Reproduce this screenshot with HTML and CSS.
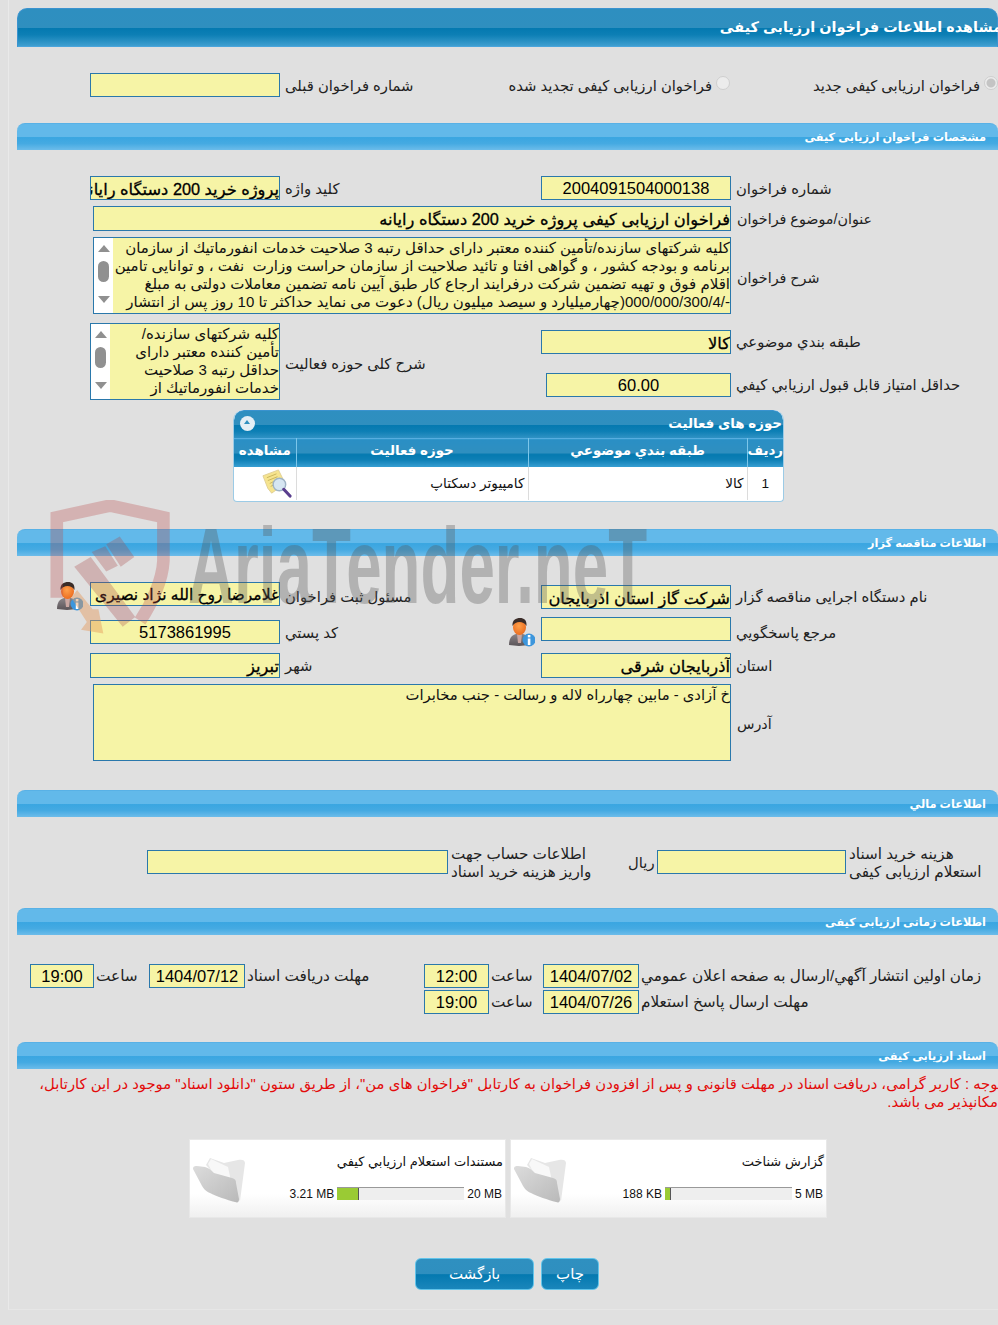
FILE: index.html
```html
<!DOCTYPE html>
<html lang="fa">
<head>
<meta charset="utf-8">
<title>مشاهده اطلاعات فراخوان ارزیابی کیفی</title>
<link rel="stylesheet" href="styles.css">
</head>
<body>
<svg class="defs" width="0" height="0">
  <defs>
    <radialGradient id="skin" cx="0.45" cy="0.4" r="0.7"><stop offset="0" stop-color="#ffa04a"/><stop offset="1" stop-color="#e8651a"/></radialGradient>
    <linearGradient id="suit" x1="0" y1="0" x2="0" y2="1"><stop offset="0" stop-color="#8a8488"/><stop offset="1" stop-color="#5a5458"/></linearGradient>
    <linearGradient id="fold" x1="0" y1="0" x2="1" y2="1"><stop offset="0" stop-color="#dcdcdc"/><stop offset="1" stop-color="#b9b9b9"/></linearGradient>
    <symbol id="user" viewBox="0 0 28 30">
      <path d="M2 28c0-7 3-10 7-11h7c4 1 6 4 6 11l-10 1z" fill="url(#suit)"/>
      <path d="M10 17h5l-1 9h-3z" fill="#c9a7a2"/>
      <ellipse cx="12.5" cy="10.5" rx="6.5" ry="7.5" fill="url(#skin)"/>
      <path d="M5.500 9C5 3 9 1 13 1c4 0 7 2 6.500 8-2-3-4-4-7-4-3 0-5 1-7 4z" fill="#3a2c28"/>
      <circle cx="22" cy="23" r="6.500" fill="#3d96dc"/>
      <rect x="20.800" y="21.500" width="2.600" height="6.500" fill="#fff"/>
      <rect x="20.800" y="18" width="2.600" height="2.400" fill="#fff"/>
    </symbol>
    <symbol id="docview" viewBox="0 0 32 30">
      <path d="M2 7 18 1l7 14-14 10-4-5z" fill="#f6e48e" stroke="#e0cf96"/>
      <path d="M6 9l10-4M7 12l10-4M9 15l6-3M10 18l4-2" stroke="#c9b45c" fill="none"/>
      <circle cx="19" cy="16" r="6.500" fill="#d6e6f2" stroke="#9fb4c6" stroke-width="1.500"/>
      <path d="M23.500 21 30 28" stroke="#5a3f8e" stroke-width="3.200" stroke-linecap="round"/>
    </symbol>
    <symbol id="folder" viewBox="0 0 54 48">
      <path d="M14 10 18 3l14 5 14-3c4-1 7 0 7 3l-5 38z" fill="#e6e6e6"/>
      <path d="M16 9 19 4l17 8 6 28-14-8z" fill="#f8f8f8"/>
      <path d="M1 14c0-3 2-3 4-3l8 1c4 1 6 3 9 6l18 5c3 1 4 2 4 5l3 16c0 3-1 4-4 3-8-2-19-6-25-9-5-2-7-5-9-9z" fill="url(#fold)"/>
    </symbol>
  </defs>
</svg>

<div class="shell">
  <main class="main">
    <h1 class="title-bar"><span class="title-text">مشاهده اطلاعات فراخوان ارزیابی کیفی</span></h1>

    <div class="r-top">
      <span></span>
      <div class="in"></div>
      <label class="lb">شماره فراخوان قبلی</label>
      <label class="radio-wrap"><input class="radio" type="radio" disabled><span>فراخوان ارزیابی کیفی تجدید شده</span></label>
      <label class="radio-wrap"><input class="radio on" type="radio" disabled checked><span>فراخوان ارزیابی کیفی جدید</span></label>
    </div>

    <h2 class="bar bar-a">مشخصات فراخوان ارزیابی کیفی</h2>

    <div class="r r-1">
      <span></span>
      <div class="in bold">پروژه خرید 200 دستگاه رایانه</div>
      <label class="lb">کلید واژه</label>
      <div class="in num">2004091504000138</div>
      <label class="lb">شماره فراخوان</label>
    </div>
    <div class="r-wide r-2">
      <span></span>
      <div class="in bold h25">فراخوان ارزیابی کیفی پروژه خرید 200 دستگاه رایانه</div>
      <label class="lb">عنوان/موضوع فراخوان</label>
    </div>
    <div class="r-wide r-3">
      <span></span>
      <div class="area h77">
        <div class="sb"><i class="up"></i><i class="thumb"></i><i class="dn"></i></div>
        <div class="area-text">
          <div>کلیه شرکتهای سازنده/تأمین کننده معتبر دارای حداقل رتبه 3 صلاحیت خدمات انفورماتیك از سازمان</div>
          <div>برنامه و بودجه کشور ، و گواهی افتا و تائید صلاحیت از سازمان حراست وزارت&nbsp; نفت ، و توانایی تامین</div>
          <div>اقلام فوق و تهیه تضمین شرکت درفرایند ارجاع کار طبق آیین نامه تضمین معاملات دولتی به مبلغ</div>
          <div>-/000/000/300/4(چهارمیلیارد و سیصد میلیون ریال) دعوت می نماید حداکثر تا 10 روز پس از انتشار</div>
        </div>
      </div>
      <label class="lb">شرح فراخوان</label>
    </div>
    <div class="r r-4">
      <span></span>
      <div class="area h77">
        <div class="sb"><i class="up"></i><i class="thumb"></i><i class="dn"></i></div>
        <div class="area-text">
          <div>کلیه شرکتهای سازنده/</div>
          <div>تأمین کننده معتبر دارای</div>
          <div>حداقل رتبه 3 صلاحیت</div>
          <div>خدمات انفورماتیك از</div>
        </div>
      </div>
      <label class="lb">شرح کلی حوزه فعالیت</label>
      <div class="stack">
        <div class="in bold">کالا</div>
        <div class="in num score">60.00</div>
      </div>
      <div class="stack-labels">
        <label class="lb">طبقه بندي موضوعي</label>
        <label class="lb">حداقل امتياز قابل قبول ارزيابي كيفي</label>
      </div>
    </div>

    <section class="act">
      <div class="act-head"><span class="act-title">حوزه های فعالیت</span><span class="collapse"></span></div>
      <table class="act-table">
        <thead><tr><th class="c1">رديف</th><th class="c2">طبقه بندي موضوعي</th><th class="c3">حوزه فعالیت</th><th class="c4">مشاهده</th></tr></thead>
        <tbody><tr><td class="c1 ctr">1</td><td class="c2">كالا</td><td class="c3">کامپیوتر دسکتاپ</td><td class="c4"><svg class="doc-ic"><use href="#docview"/></svg></td></tr></tbody>
      </table>
    </section>

    <h2 class="bar bar-b">اطلاعات مناقصه گزار</h2>

    <div class="r r-5">
      <svg class="user-ic u1"><use href="#user"/></svg>
      <div class="in bold fit">غلامرضا روح الله نژاد نصیری</div>
      <label class="lb lb-up">مسئول ثبت فراخوان</label>
      <div class="in bold mt3">شرکت گاز استان اذربایجان</div>
      <label class="lb lb-up">نام دستگاه اجرایی مناقصه گزار</label>
    </div>
    <div class="r r-6">
      <span></span>
      <div class="in num mt3">5173861995</div>
      <label class="lb lb-up">کد پستي</label>
      <div class="in"></div>
      <label class="lb lb-up">مرجع پاسخگويي</label>
      <svg class="user-ic u2"><use href="#user"/></svg>
    </div>
    <div class="r r-7">
      <span></span>
      <div class="in bold h25">تبریز</div>
      <label class="lb">شهر</label>
      <div class="in bold h25">آذربایجان شرقی</div>
      <label class="lb">استان</label>
    </div>
    <div class="r-wide r-8">
      <span></span>
      <div class="area h77 addr">خ آزادی - مابین چهارراه لاله و رسالت - جنب مخابرات</div>
      <label class="lb">آدرس</label>
    </div>

    <h2 class="bar bar-c">اطلاعات مالي</h2>

    <div class="r-money">
      <span></span>
      <div class="in"></div>
      <label class="lb lb-two">اطلاعات حساب جهت<br>واریز هزینه خرید اسناد</label>
      <label class="lb lb-plain">ریال</label>
      <div class="in"></div>
      <label class="lb lb-two">هزینه خرید اسناد<br>استعلام ارزیابی کیفی</label>
    </div>

    <h2 class="bar bar-d">اطلاعات زمانی ارزیابی کیفی</h2>

    <div class="r-time rt-1">
      <span></span>
      <div class="in num">19:00</div>
      <label class="lb lb-s">ساعت</label>
      <div class="in num">1404/07/12</div>
      <label class="lb lb-s">مهلت دریافت اسناد</label>
      <div class="in num">12:00</div>
      <label class="lb lb-s">ساعت</label>
      <div class="in num">1404/07/02</div>
      <label class="lb lb-s">زمان اولین انتشار آگهي/ارسال به صفحه اعلان عمومي</label>
    </div>
    <div class="r-time rt-2">
      <span></span><span></span><span></span><span></span><span></span>
      <div class="in num">19:00</div>
      <label class="lb lb-s">ساعت</label>
      <div class="in num">1404/07/26</div>
      <label class="lb lb-s">مهلت ارسال پاسخ استعلام</label>
    </div>

    <h2 class="bar bar-e">اسناد ارزیابی کیفی</h2>

    <p class="notice">توجه : کاربر گرامی، دریافت اسناد در مهلت قانونی و پس از افزودن فراخوان به کارتابل "فراخوان های من"، از طریق ستون "دانلود اسناد" موجود در این کارتابل،<br>امکانپذیر می باشد.</p>

    <div class="cards">
      <article class="card">
        <svg class="folder-ic"><use href="#folder"/></svg>
        <div class="card-body">
          <div class="card-title">مستندات استعلام ارزيابي کيفي</div>
          <div class="quota"><span>3.21 MB</span><span class="meter"><span class="fill" style="width:22px"></span></span><span>20 MB</span></div>
        </div>
      </article>
      <article class="card">
        <svg class="folder-ic"><use href="#folder"/></svg>
        <div class="card-body">
          <div class="card-title">گزارش شناخت</div>
          <div class="quota"><span>188 KB</span><span class="meter"><span class="fill" style="width:6px"></span></span><span>5 MB</span></div>
        </div>
      </article>
    </div>

    <div class="actions">
      <button class="btn btn-back" type="button">بازگشت</button>
      <button class="btn btn-print" type="button">چاپ</button>
    </div>
  </main>
</div>

<div class="wm" aria-hidden="true">
  <svg class="wm-shield" viewBox="0 0 130 145">
    <path d="M7 100V17L62 5l55 12v45c-1 20-12 44-24 62" fill="none" stroke="#b84a4a" stroke-opacity=".3" stroke-width="13"/>
    <path d="M58 45 72 37 87 58 73 68zM43 53 57 47 70 67 58 73zM25 68 42 58 88 120 75 130z" fill="#a84a4a" fill-opacity=".3"/>
    <path d="M28 92 44 112 50 112 55 137 32 133 38 125 22 100z" fill="#e59a5a" fill-opacity=".45"/>
  </svg>
  <span class="wm-text">AriaTender.neT</span>
</div>
</body>
</html>
```

FILE: styles.css
```css
* { box-sizing: border-box; }
html, body { margin: 0; padding: 0; height: 1325px; overflow: hidden; }
body {
  background: #e0e0e0;
  color: #111;
  font-family: "Liberation Sans", "DejaVu Sans", sans-serif;
  font-size: 13px;
  position: relative;
}
.defs { position: absolute; }
.shell {
  margin-left: 8px;
  width: 990px;
  height: 1310px;
  padding-left: 8px;
  border-left: 1px solid #e9e9e9;
  border-bottom: 1px solid #e6e6e6;
}
.main { width: 981px; padding-top: 8px; }

/* bars */
.title-bar {
  margin: 0;
  height: 39px;
  border: 1px solid #3a93cf;
  border-bottom-color: #4aa5dc;
  border-radius: 10px 10px 0 0;
  background: linear-gradient(#2e8fc0 0, #2f8fbf 50%, #0479b0 52%, #0d7fb5 70%, #3f9fd0 100%);
  color: #fff;
  direction: rtl;
  font-size: 14.400px;
  font-weight: bold;
  line-height: 36px;
  white-space: nowrap;
  text-align: right;
  overflow: visible;
}
.title-text { margin-right: -5px; display: inline-block; }
.bar {
  margin: 0;
  height: 27px;
  border-top: 1px solid #58b1e6;
  border-radius: 8px 8px 0 0;
  background: linear-gradient(#62b9ea 0, #62b9ea 50%, #3aa6e1 52%, #45aae2 75%, #6cbcea 100%);
  color: #fff;
  direction: rtl;
  font-size: 11.300px;
  font-weight: bold;
  line-height: 27px;
  padding-right: 12px;
  white-space: nowrap;
}
.bar-a { margin-top: 26px; }
.bar-b { margin-top: 27px; }
.bar-c { margin-top: 29px; }
.bar-d { margin-top: 34px; }
.bar-e { margin-top: 28px; }

/* inputs */
.in {
  height: 24px;
  width: 100%;
  border: 1px solid #2a78ab;
  background: #f6f4a6;
  direction: rtl;
  text-align: right;
  font-size: 15px;
  line-height: 22px;
  white-space: nowrap;
  overflow: hidden;
  color: #000;
}
.in.bold { font-size: 16.300px; line-height: 24px; -webkit-text-stroke: .3px #000; }
.in.fit { font-size: 15.500px; }
.in.num { text-align: center; font-size: 16.500px; font-family: "Liberation Sans", sans-serif; direction: ltr; }
.h25 { height: 25px; }
.mt3 { margin-top: 3px; }
.lb {
  direction: rtl;
  text-align: left;
  font-size: 14.800px;
  line-height: 26px;
  padding-left: 5px;
  white-space: nowrap;
  color: #222;
}
.lb-plain { padding-left: 0; }

/* rows */
.r, .r-top, .r-wide { display: grid; align-items: start; }
.r { grid-template-columns: 73px 190px 261px 190px 267px; }
.r-top { grid-template-columns: 73px 190px 225px 225px 268px; margin-top: 26px; height: 24px; }
.r-wide { grid-template-columns: 76px 638px 267px; }
.r-wide .lb { padding-left: 6px; font-size: 14.300px; }
.r-1 { margin-top: 26px; height: 24px; }
.r-2 { margin-top: 6px; height: 25px; }
.r-3 { margin-top: 6px; height: 77px; }
.r-3 .lb { line-height: 82px; }
.r-4 { margin-top: 9px; height: 77px; }
.r-4 > .lb { line-height: 82px; }
.stack { padding-top: 7px; display: flex; flex-direction: column; align-items: flex-end; gap: 19px; }
.score { width: 185px; }
.stack-labels { padding-top: 6px; display: flex; flex-direction: column; gap: 17px; }
.r-5 { margin-top: 26px; height: 26px; }
.r-5 .lb-up { margin-top: 2px; }
.r-6 { margin-top: 9px; height: 27px; position: relative; }
.r-7 { margin-top: 9px; height: 25px; }
.r-8 { margin-top: 6px; height: 77px; }
.r-8 .lb { line-height: 80px; }
.lb-up { margin-top: 3px; }
.user-ic { width: 28px; height: 30px; display: block; }
.u1 { margin: -1px 0 0 38px; }
.u2 { position: absolute; left: 490px; top: 0; }

/* radio */
.radio-wrap { display: flex; direction: rtl; align-items: flex-start; gap: 4px; font-size: 14.800px; line-height: 26px; color: #222; white-space: nowrap; }
.radio {
  appearance: none;
  -webkit-appearance: none;
  width: 14px; height: 14px;
  margin: 3px 0 0;
  border: 1px solid #cfcfcf;
  border-radius: 50%;
  background: #ececec;
  flex: none;
}
.radio.on { background: radial-gradient(circle, #c4c4c4 0 4px, #ececec 5px); }

/* text areas */
.area { display: flex; border: 1px solid #2a78ab; background: #f6f4a6; overflow: hidden; width: 100%; }
.h77 { height: 77px; }
.sb { width: 19px; flex: none; background: #fff; display: flex; flex-direction: column; align-items: center; padding-top: 7px; }
.sb i { display: block; }
.up { width: 0; height: 0; border: 6px solid transparent; border-top: 0; border-bottom: 7px solid #909090; }
.thumb { width: 11px; height: 21px; border-radius: 6px; background: #909090; margin-top: 9px; }
.dn { width: 0; height: 0; border: 6px solid transparent; border-bottom: 0; border-top: 7px solid #909090; margin-top: 14px; }
.area-text { flex: 1; direction: rtl; text-align: right; font-size: 15px; line-height: 18px; padding-top: 1px; white-space: nowrap; overflow: hidden; color: #111; }
.addr { display: block; direction: rtl; text-align: right; font-size: 14.800px; line-height: 18px; white-space: nowrap; padding-top: 1px; }

/* activity table */
.act { margin: 10px 0 0 216px; width: 551px; height: 92px; border: 1px solid #9ccbe6; border-top: 0; border-radius: 10px 10px 4px 4px; background: #fff; overflow: hidden; }
.act-head {
  height: 28px;
  display: flex;
  direction: rtl;
  justify-content: space-between;
  align-items: center;
  padding: 0 1px 3px 6px;
  border-top: 1px solid #3a93cf;
  border-radius: 10px 10px 0 0;
  background: linear-gradient(#2e8fc0 0, #2f8fbf 50%, #0479b0 52%, #0d7fb5 75%, #2f92c4 100%);
  color: #fff;
  font-size: 13.400px;
  font-weight: bold;
}
.collapse { width: 15px; height: 15px; border-radius: 50%; background: #e4eef5; position: relative; }
.collapse::after { content: ""; position: absolute; left: 4px; top: 4px; border: 3.500px solid transparent; border-top: 0; border-bottom: 4px solid #2f8fbf; }
.act-table { width: 100%; border-collapse: collapse; table-layout: fixed; direction: rtl; }
.act-table th {
  height: 28px;
  padding: 0 0 4px;
  border-left: 1px solid #7cc6ea;
  border-top: 1px solid #56aee0;
  background: linear-gradient(#2a8fc5 0, #2f8fbf 50%, #0479b0 52%, #0d7fb5 72%, #3aa0d4 100%);
  color: #fff;
  font-size: 13.400px;
  font-weight: bold;
}
.act-table th:last-child, .act-table td:last-child { border-left: 0; }
.act-table td { height: 33px; padding: 0 3px 0 0; border-left: 1px solid #dcdcdc; text-align: right; font-size: 13.600px; color: #111; vertical-align: middle; }
.c1 { width: 36px; }
.c2 { width: 219px; }
.c3 { width: 232px; }
.c4 { width: 62px; }
.act-table td.ctr { text-align: center; padding: 0; }
.doc-ic { width: 31px; height: 29px; display: block; margin: 1px 1px 0 auto; }

/* money */
.r-money { display: grid; grid-template-columns: 130px 301px 180px 29px 189px 152px; align-items: start; margin-top: 33px; height: 24px; }
.lb-two { font-size: 15.200px; line-height: 18px; padding-left: 3px; margin-top: -5px; }

/* time */
.r-time { display: grid; grid-template-columns: 13px 64px 55px 96px 179px 65px 54px 96px 360px; align-items: start; height: 24px; }
.rt-1 { margin-top: 29px; }
.rt-2 { margin-top: 2px; }
.lb-s { padding-left: 2px; font-size: 15.300px; line-height: 24px; }

/* notice */
.notice { margin: 6px -4px 0 0; direction: rtl; text-align: right; color: #e30b0b; font-size: 14.800px; line-height: 18px; white-space: nowrap; }

/* cards */
.cards { display: flex; gap: 4px; margin: 28px 0 0 172px; }
.card {
  width: 317px;
  height: 79px;
  display: flex;
  border: 1px solid #e8e8e8;
  background: linear-gradient(#fff 0, #fff 70%, #f0f0f0 100%);
}
.folder-ic { width: 54px; height: 48px; margin: 15px 0 0 2px; flex: none; }
.card-body { flex: 1; direction: rtl; padding: 13px 2px 0 3px; }
.card-title { font-size: 13px; line-height: 18px; text-align: right; white-space: nowrap; color: #111; }
.quota { display: flex; direction: ltr; justify-content: flex-end; align-items: center; gap: 2px; margin-top: 16px; font-size: 12px; height: 13px; color: #111; padding-right: 1px; }
.meter { width: 127px; height: 13px; background: #eeeeee; border-top: 1px solid #999; display: block; margin: 0 1px; }
.fill { display: block; height: 12px; background: #9acb34; border-right: 1px solid #555; }

/* actions */
.actions { display: flex; gap: 7px; margin: 40px 0 0 398px; direction: ltr; }
.btn {
  height: 32px;
  border: 1px solid #62c4ea;
  border-radius: 6px;
  background: linear-gradient(#2f90c0 0, #2f8fbf 50%, #0479b0 52%, #1a86bb 100%);
  color: #fff;
  direction: rtl;
  font-family: "Liberation Sans", "DejaVu Sans", sans-serif;
  font-size: 15px;
  padding: 0;
}
.btn-back { width: 119px; }
.btn-print { width: 58px; }

/* watermark overlay */
.wm { position: absolute; left: 50px; top: 500px; width: 610px; height: 145px; pointer-events: none; z-index: 5; }
.wm-shield { position: absolute; left: 0; top: 0; width: 126px; height: 142px; }
.wm-text {
  position: absolute;
  left: 138px;
  top: 6px;
  font-family: "Liberation Sans Narrow", "Liberation Sans", sans-serif;
  font-weight: bold;
  font-size: 108px;
  line-height: 120px;
  color: rgba(85, 85, 85, .33);
  white-space: nowrap;
  transform: scaleX(.59);
  transform-origin: left top;
}
```
